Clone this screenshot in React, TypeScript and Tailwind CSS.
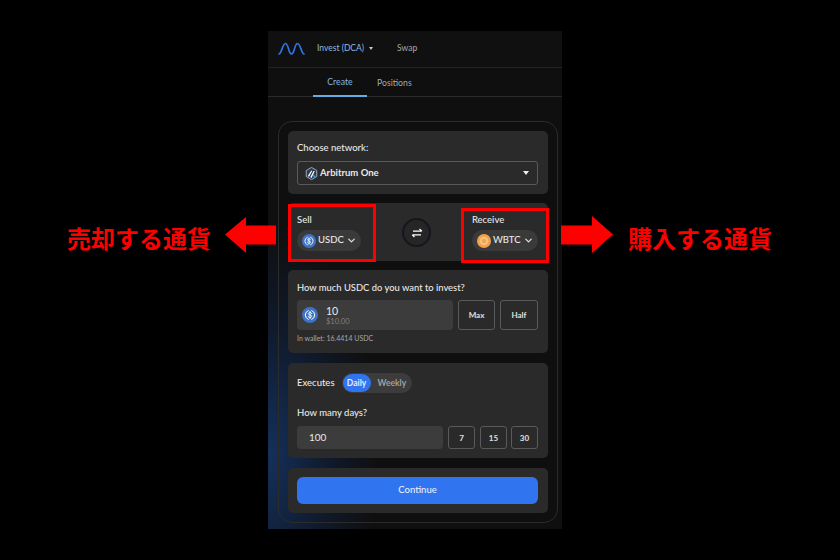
import React from "react";
import { ChevronDown } from "lucide-react";

function Usdc({ size }: { size: number }) {
  return (
    <svg width={size} height={size} viewBox="0 0 32 32" className="shrink-0">
      <circle cx="16" cy="16" r="16" fill="#3e73c4" />
      <path d="M12.5 7.2a9.5 9.5 0 0 0 0 17.6M19.5 7.2a9.5 9.5 0 0 1 0 17.6" fill="none" stroke="#fff" strokeWidth="2" strokeLinecap="round" />
      <path d="M19.3 13.200c0-1.600-1.400-2.400-3.300-2.400s-3.200 1-3.200 2.400c0 3.600 6.600 1.900 6.600 5.500 0 1.500-1.400 2.500-3.400 2.500s-3.400-.9-3.400-2.600M16 9v14" fill="none" stroke="#fff" strokeWidth="1.8" strokeLinecap="round" />
    </svg>
  );
}

function Wbtc() {
  return (
    <svg width="14" height="14" viewBox="0 0 32 32" className="shrink-0">
      <circle cx="16" cy="16" r="16" fill="#f2a14a" />
      <circle cx="16" cy="16" r="10" fill="#f7c27f" />
      <circle cx="16" cy="16" r="5" fill="#f0a650" />
    </svg>
  );
}

function Arb() {
  return (
    <svg width="13" height="13" viewBox="0 0 32 32" className="shrink-0">
      <path d="M16 1l13 7.500v15L16 31 3 23.500v-15z" fill="#2c3e55" stroke="#b6c4d6" strokeWidth="2" />
      <path d="M7 22l8-13h3l-8 15zM13 25l8-15h3l-8 17z" fill="#fff" />
      <path d="M21 17l5 7-4 2-3-5z" fill="#28a0f0" />
    </svg>
  );
}

function TokenPill({ icon, label }: { icon: React.ReactNode; label: string }) {
  return (
    <div className="flex h-[21px] w-fit items-center gap-[2px] rounded-full bg-[#3a3a3a] pl-[5px] pr-[4.5px] text-[9.5px] font-medium text-[#e8e8e8]">
      {icon}
      <span>{label}</span>
      <ChevronDown size={11} strokeWidth={2.5} />
    </div>
  );
}

function SmallButton({ label, className }: { label: string; className: string }) {
  return (
    <div className={`flex shrink-0 items-center justify-center rounded-[3px] border border-[#5a5a5a] font-bold text-[#e0e0e0] ${className}`}>
      {label}
    </div>
  );
}

export default function App() {
  return (
    <div className="relative h-[560px] w-[840px] overflow-hidden bg-black pl-[268px] pt-[31px] font-['Lato',sans-serif]">
      <div className="flex h-[498px] w-[294px] flex-col bg-[#0f0f0f] bg-[radial-gradient(ellipse_110px_230px_at_0%_85%,#15305a_0%,#0f1a2c_55%,#0f0f0f_100%)]">
        <div className="flex h-[37px] shrink-0 items-center border-b border-[#232323] bg-[#101010] pb-[2px] pl-[10px] text-[8.5px]">
          <svg width="27" height="13" viewBox="0 0 27 13" fill="none">
            <path d="M1 12C3.500 12 4.500 1.500 7.500 1.500S10.500 12 13.500 12 16.500 1.500 19.500 1.500 23.500 12 26 12" stroke="#2f74e8" strokeWidth="1.700" strokeLinecap="round" />
          </svg>
          <span className="ml-[12px] text-[#8fb8e0]">Invest (DCA)</span>
          <svg width="4" height="3" viewBox="0 0 4 3" className="ml-[5px]"><path d="M0 0h4L2 3z" fill="#c8c8c8" /></svg>
          <span className="ml-[24px] text-[#a8a8a8]">Swap</span>
        </div>
        <div className="flex h-[29px] shrink-0 border-b border-[#2a2a2a] pt-[1px] text-[8.7px] text-[#a8a8a8]">
          <div className="mb-[-1px] ml-[45px] flex w-[54px] items-center justify-center border-b-2 border-[#64aee8] text-[#7fb6e4]">Create</div>
          <div className="ml-[10px] flex items-center">Positions</div>
        </div>
        <div className="ml-[10px] mt-[24px] flex h-[402px] w-[280px] flex-col rounded-[14px] border border-[#2b2b2b] px-[9px] pt-[9px]">
          <div className="h-[63px] rounded-[5px] bg-[#2a2a2a] pl-[9px] pr-[10px] pt-[10px]">
            <div className="text-[9.5px] font-medium leading-[13px] text-[#e8e8e8]">Choose network:</div>
            <div className="mt-[7px] flex h-[24px] items-center rounded-[3px] border border-[#5a5a5a] pl-[7px] pr-[8px] text-[9.5px] text-[#e8e8e8]">
              <Arb />
              <span className="ml-[2px] font-bold">Arbitrum One</span>
              <svg width="6" height="4" viewBox="0 0 6 4" className="ml-auto"><path d="M0 0h6L3 4z" fill="#eee" /></svg>
            </div>
          </div>
          <div className="mt-[9px] flex h-[58px] shrink-0 justify-between rounded-[5px] bg-[#2a2a2a] pl-[9px] pr-[10px] pt-[10px]">
            <div>
              <div className="text-[9.5px] font-medium leading-[13px] text-[#e8e8e8]">Sell</div>
              <div className="mt-[4px]"><TokenPill icon={<Usdc size={14} />} label="USDC" /></div>
            </div>
            <div className="mt-[5px] flex h-[29px] w-[29px] items-center justify-center rounded-full border-2 border-[#16161e] bg-[#262626]">
              <svg width="12" height="10" viewBox="0 0 12 10" fill="none" stroke="#fff" strokeWidth="1.200">
                <path d="M2 3.200h8.500M8.500 1l2.400 2.200M10 6.800H1.500M3.500 9L1.200 6.800" />
              </svg>
            </div>
            <div>
              <div className="text-[9.5px] font-medium leading-[13px] text-[#e8e8e8]">Receive</div>
              <div className="mt-[4px]"><TokenPill icon={<Wbtc />} label="WBTC" /></div>
            </div>
          </div>
          <div className="mt-[9px] h-[83px] shrink-0 rounded-[5px] bg-[#2a2a2a] pl-[9px] pr-[10px] pt-[11px]">
            <div className="text-[9.4px] font-medium leading-[13px] text-[#e8e8e8]">How much USDC do you want to invest?</div>
            <div className="mt-[6px] flex gap-[5px]">
              <div className="flex h-[30px] flex-1 items-center rounded-[4px] bg-[#3c3c3c] pl-[5px]">
                <Usdc size={16} />
                <div className="ml-[8px] flex flex-col pt-[1px]">
                  <span className="text-[10.5px] leading-[12px] text-[#e8e8e8]">10</span>
                  <span className="text-[7.5px] leading-[9px] text-[#808080]">$10.00</span>
                </div>
              </div>
              <SmallButton label="Max" className="h-[30px] w-[37px] text-[8px]" />
              <SmallButton label="Half" className="h-[30px] w-[38px] text-[8px]" />
            </div>
            <div className="mt-[3px] text-[7px] leading-[10px] text-[#a8a8a8]">In wallet: 16.4414 USDC</div>
          </div>
          <div className="mt-[10px] h-[95px] shrink-0 rounded-[5px] bg-[#2a2a2a] pl-[9px] pr-[10px] pt-[10px]">
            <div className="flex items-center">
              <span className="text-[9.5px] font-medium text-[#e8e8e8]">Executes</span>
              <div className="ml-[7px] flex h-[20px] w-[70px] items-center rounded-full bg-[#3c3c3c] pl-[1px] text-[8.5px]">
                <span className="flex h-[18px] w-[28px] items-center justify-center rounded-full bg-[#3074f0] font-bold text-[#e6eefc]">Daily</span>
                <span className="ml-[7px] font-bold text-[#a0a0a0]">Weekly</span>
              </div>
            </div>
            <div className="mt-[13px] text-[9.5px] font-medium leading-[13px] text-[#e8e8e8]">How many days?</div>
            <div className="mt-[7px] flex gap-[5px]">
              <div className="flex h-[23px] flex-1 items-center rounded-[4px] bg-[#3c3c3c] pl-[12px] text-[10px] text-[#e8e8e8]">100</div>
              <SmallButton label="7" className="h-[23px] w-[27px] text-[8px]" />
              <SmallButton label="15" className="h-[23px] w-[27px] text-[8px]" />
              <SmallButton label="30" className="-ml-[1px] h-[23px] w-[27px] text-[8px]" />
            </div>
          </div>
          <div className="mt-[10px] h-[45px] shrink-0 rounded-[5px] bg-[#2a2a2a] pl-[9px] pr-[10px] pt-[9px]">
            <div className="flex h-[27px] items-center justify-center rounded-[6px] bg-[#3074f0] text-[9.5px] font-medium text-[#e6eefc]">Continue</div>
          </div>
        </div>
      </div>

      <div className="absolute left-[288px] top-[204px] h-[58px] w-[88px] border-[3px] border-[#ff0000]" />
      <div className="absolute left-[461px] top-[208px] h-[55px] w-[88px] border-[3px] border-[#ff0000]" />

      <svg className="absolute left-[224px] top-[215px]" width="52" height="40" viewBox="0 0 52 40">
        <path d="M1 19.500L22 2v8.500h30v19H22V38z" fill="#ff0000" />
      </svg>
      <svg className="absolute left-[561px] top-[215px]" width="53" height="40" viewBox="0 0 53 40">
        <path d="M52 19.500L31 1v9.500H0v19h31V38z" fill="#ff0000" />
      </svg>

      <div className="absolute left-[67px] top-[221px] whitespace-nowrap font-['Noto_Sans_CJK_JP',sans-serif] text-[24px] font-bold leading-[34px] text-[#ff0000]">売却する通貨</div>
      <div className="absolute left-[628px] top-[221px] whitespace-nowrap font-['Noto_Sans_CJK_JP',sans-serif] text-[24px] font-bold leading-[34px] text-[#ff0000]">購入する通貨</div>
    </div>
  );
}
